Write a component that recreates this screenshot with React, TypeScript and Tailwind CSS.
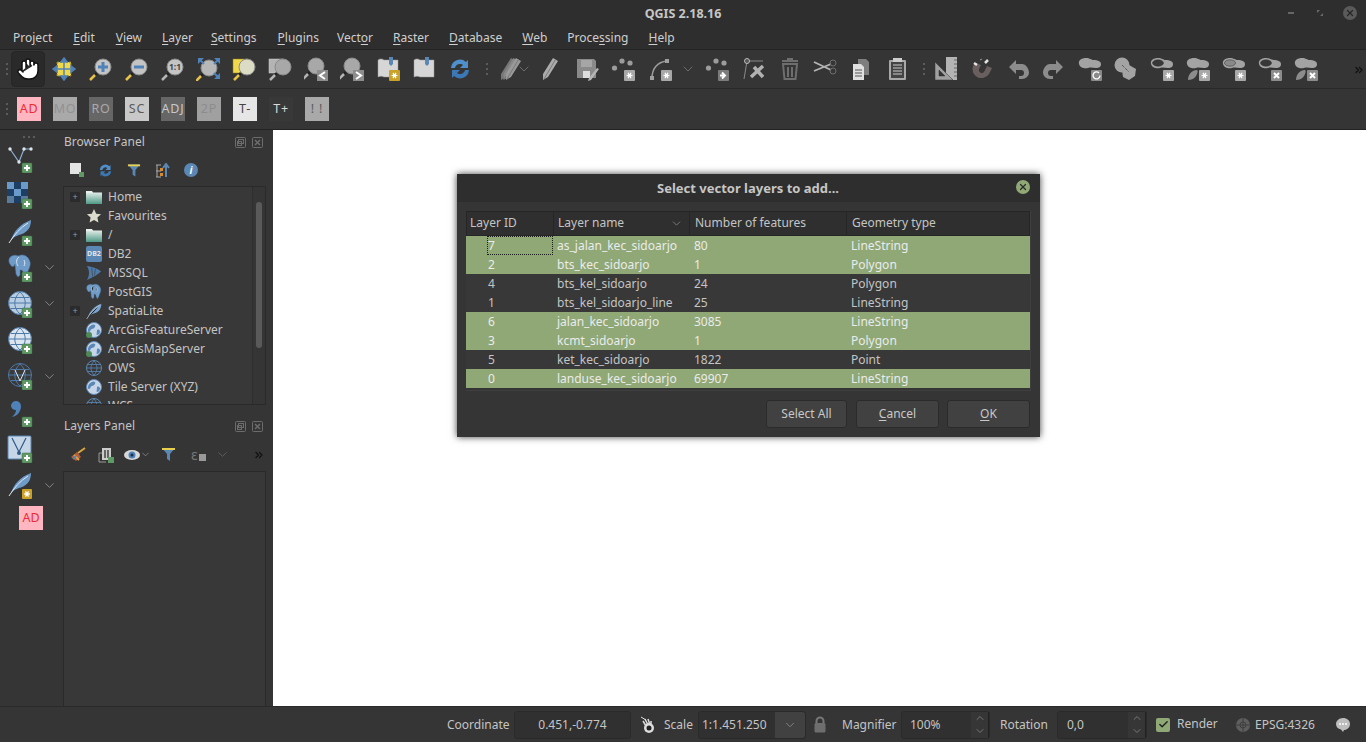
import React from "react";
import { Hand, ChevronDown, ChevronUp, ChevronsRight, Check, X } from "lucide-react";

const S = ({ children, w = 24, h = 24 }: { children: React.ReactNode; w?: number; h?: number }) => (
  <svg width={w} height={h} viewBox={`0 0 ${w} ${h}`} fill="none">{children}</svg>
);

const Mag = ({ children, handle = "#e8c34a", lens = "#c4c4c4", cx = 15, cy = 10 }: { children?: React.ReactNode; handle?: string; lens?: string; cx?: number; cy?: number }) => (
  <>
    <line x1={cx - 6} y1={cy + 6} x2={cx - 8} y2={cy + 8} stroke="#222" strokeWidth="2.5" />
    <line x1={cx - 8} y1={cy + 8} x2={cx - 13} y2={cy + 13} stroke={handle} strokeWidth="2.5" />
    <circle cx={cx} cy={cy} r="8" fill={lens} stroke="#8a8a8a" strokeWidth="1" />
    {children}
  </>
);

const Star = ({ x, y, c = "#fff" }: { x: number; y: number; c?: string }) => (
  <g stroke={c} strokeWidth="1.2">
    <line x1={x - 3} y1={y} x2={x + 3} y2={y} />
    <line x1={x - 1.5} y1={y - 2.6} x2={x + 1.5} y2={y + 2.6} />
    <line x1={x + 1.5} y1={y - 2.6} x2={x - 1.5} y2={y + 2.6} />
    <circle cx={x} cy={y} r="1" fill={c} />
  </g>
);

const BadgeGear = ({ x = 13, y = 13, bg = "#a8a8a8" }: { x?: number; y?: number; bg?: string }) => (
  <>
    <rect x={x} y={y} width="11" height="11" rx="1" fill={bg} />
    <Star x={x + 5.5} y={y + 5.5} />
  </>
);

const BadgeX = ({ x = 13, y = 13 }: { x?: number; y?: number }) => (
  <>
    <rect x={x} y={y} width="11" height="11" rx="1" fill="#8c8c8c" />
    <path d={`M${x + 3} ${y + 3}l5 5m0-5l-5 5`} stroke="#fff" strokeWidth="2" />
  </>
);

const Plus = ({ x = 15, y = 18 }: { x?: number; y?: number }) => (
  <>
    <rect x={x} y={y} width="10" height="10" rx="1" fill="#5f9a64" stroke="#3f6d45" strokeWidth="0.5" />
    <path d={`M${x + 5} ${y + 2}v6M${x + 2} ${y + 5}h6`} stroke="#fff" strokeWidth="2" />
  </>
);

const BLOB = "M1 7c-1-4 3-6 7-6s5 2 8 2 7 1 7 4-2 4-5 4-5-1-8 0-8 0-9-4z";

const Blob = ({ c = "#a3a3a3", hole = false, inner = "#383838" }: { c?: string; hole?: boolean; inner?: string }) => (
  <>
    <path d={BLOB} fill={c} />
    {hole && <ellipse cx="8" cy="6" rx="5.5" ry="3.2" fill={inner} stroke="#333" strokeWidth="0.5" />}
  </>
);

const Lower = () => <path d="M2 23c0-5 3-9 8-10 2 0 2 1 1 4s-4 6-9 6z" fill="#8c8c8c" />;

const Feather = ({ c = "#6f9bc9" }: { c?: string }) => (
  <>
    <path d="M3 21C6 12 12 5 23 1c0 8-4 12-9 14-3 1-7 2-11 6z" fill={c} />
    <path d="M1 24C6 16 12 9 20 4" stroke="#dfe8f0" strokeWidth="1" />
  </>
);

const Elephant = () => (
  <>
    <path d="M4 2c-3 1-4 5-2 8 1 2 2 3 4 2l1-2c0 3 1 6 1 10l2 3 2-2 0-5c2 0 3 0 3 3l2 4 2-3c1-4 4-8 3-12S18 1 14 1c-2 0-3 1-4 1-2-1-4-1-6 0z" fill="#6f9bc9" stroke="#4d7aa8" strokeWidth="0.6" />
    <path d="M11 3c-3 2-3 6-1 9M16 6c1 2 1 4 0 6" stroke="#dbe6f0" strokeWidth="1" />
  </>
);

const Globe = ({ c = "#b9cde2", line = "#4d7aa8" }: { c?: string; line?: string }) => (
  <>
    <circle cx="12" cy="12" r="11.5" fill={c} stroke={line} strokeWidth="1" />
    <path d="M1 12h22M3 6.500h18M3 17.500h18M12 1c-7 6-7 16 0 22M12 1c7 6 7 16 0 22" stroke={line} strokeWidth="1" />
  </>
);

const SmallGlobe = ({ land = true }: { land?: boolean }) => (
  <S w={16} h={16}>
    <circle cx="8" cy="8" r="7.500" fill={land ? "#c6d6e8" : "none"} stroke="#5b87b5" strokeWidth="1" />
    {land ? <path d="M3 5c3-3 5-3 6-2s-1 4-3 4-1 3-3 3-1-3 0-5zM11 8c2-1 3 0 3 2s-2 3-3 3 0-2 0-5z" fill="#5b87b5" /> : <path d="M1 8h14M2 4.500h12M2 11.500h12M8 1c-4 4-4 10 0 14M8 1c4 4 4 10 0 14" stroke="#5b87b5" strokeWidth="0.8" />}
  </S>
);

const Sep = () => (
  <div className="flex flex-col gap-[3px] w-[3px] items-center shrink-0">
    <span className="w-[2px] h-[2px] bg-[#5c5c5c]" />
    <span className="w-[2px] h-[2px] bg-[#5c5c5c]" />
    <span className="w-[2px] h-[2px] bg-[#5c5c5c]" />
  </div>
);

const Btn = ({ children, active = false, w = "w-9" }: { children: React.ReactNode; active?: boolean; w?: string }) => (
  <div className={`${w} h-9 flex items-center justify-center shrink-0 rounded-sm ${active ? "bg-[#2a2a2a] border border-[#262626]" : ""}`}>{children}</div>
);

const Chev = ({ c = "#6c6c6c", s = 16 }: { c?: string; s?: number }) => <ChevronDown size={s} color={c} strokeWidth={1.5} />;

const MapIcon = ({ children }: { children?: React.ReactNode }) => (
  <S>
    <path d="M2 3c2-1.500 4-1.500 6 0h14v17H8c-2-1-4-1-6 0z" fill="#d6d6d6" stroke="#9a9a9a" strokeWidth="0.5" />
    <path d="M13 0h4v7l-2 2-2-2z" fill="#5b87b5" />
    {children}
  </S>
);

const G = "#a0a0a0";
const toolbarOne: [React.ReactNode, string?][] = [
  [<S><Mag cx={15} cy={10}><path d="M15 5v10M10 10h10" stroke="#4f82b8" strokeWidth="3" /></Mag></S>],
  [<S><Mag cx={15} cy={10}><path d="M10 10h10" stroke="#4f82b8" strokeWidth="3" /></Mag></S>],
  [<S><Mag cx={15} cy={10} handle="#b5b5b5"><text x="15" y="13" fontSize="8.500" fontWeight="700" textAnchor="middle" fill="#444" fontFamily="Noto Sans, sans-serif">1:1</text></Mag></S>],
  [<S><Mag cx={13} cy={11} lens="#b8b8b8"><path d="M2 7V1h6zM24 7V1h-6zM24 16v6h-6z" fill="#4f82b8" /><path d="M4 3l4 4M22 3l-4 4M22 20l-4-4" stroke="#4f82b8" strokeWidth="2" /></Mag></S>],
  [<S><rect x="1" y="2" width="14" height="14" fill="#f0d84a" stroke="#8a7b1f" strokeWidth="0.5" /><Mag cx={15} cy={10} lens="#dcdcc4" /></S>],
  [<S><rect x="1" y="2" width="14" height="14" fill="#b4b4b4" stroke="#d0d0d0" strokeWidth="0.5" /><Mag cx={15} cy={10} handle="#b5b5b5" lens="#a8a8a8" /></S>],
  [<S><Mag cx={12} cy={9} handle="#b5b5b5" lens="#a8a8a8" /><rect x="13" y="13" width="11" height="11" fill="#8c8c8c" /><path d="M21 15l-5 3.500 5 3.500" stroke="#fff" strokeWidth="2" /></S>],
  [<S><Mag cx={12} cy={9} handle="#b5b5b5" lens="#a8a8a8" /><rect x="13" y="13" width="11" height="11" fill="#8c8c8c" /><path d="M16 15l5 3.500-5 3.500" stroke="#fff" strokeWidth="2" /></S>],
  [<MapIcon><rect x="13" y="13" width="11" height="11" rx="1" fill="#c9a227" /><Star x={18.500} y={18.500} /></MapIcon>],
  [<MapIcon />],
  [<S><path d="M3 11a9 9 0 0 1 15-6l2-2v8h-8l3-3a5 5 0 0 0-8 3z" fill="#4f8fcb" /><path d="M21 13a9 9 0 0 1-15 6l-2 2v-8h8l-3 3a5 5 0 0 0 8-3z" fill="#3b78b5" /></S>],
];

const Pencil = ({ x = 0, c = G }: { x?: number; c?: string }) => (
  <g transform={`translate(${x} 0)`}>
    <path d="M14 1l5 3-10 16-5 3 0-6z" fill={c} />
    <path d="M16.500 2.500L5 22" stroke="#6f6f6f" strokeWidth="0.8" />
  </g>
);

const Dots = () => (
  <>
    <circle cx="3.500" cy="11" r="2.600" fill="#9c9c9c" />
    <circle cx="11" cy="4" r="2.600" fill="#9c9c9c" />
    <circle cx="19" cy="6" r="2.600" fill="#9c9c9c" />
  </>
);

const toolbarTwo: [React.ReactNode, string][] = [
  [<S><Pencil x={0} c="#777" /><Pencil x={2.5} c="#888" /><Pencil x={5} c="#999" /></S>, "w-[24px]"],
  [<div className="-ml-[5px] w-[16px] flex justify-center"><Chev /></div>, "w-[11px]"],
  [<S><Pencil x={1} c="#ababab" /></S>, "w-[36px]"],
  [<S><path d="M2 2h17l2 2v17H2z" fill="#8a8a8a" /><path d="M6 3h11v7H6z" fill="#a6a6a6" /><path d="M8 14h7v7H8z" fill="#ddd" /><path d="M22 11l2 1-8 11-3 1 1-3z" fill="#b5b5b5" /></S>, "w-[37px]"],
  [<S><Dots /><BadgeGear /></S>, "w-[36px]"],
  [<S><path d="M4 21c0-9 5-16 15-17" stroke="#9c9c9c" strokeWidth="1.500" /><rect x="2" y="19" width="4" height="4" fill="#a0a0a0" /><rect x="17" y="2" width="4" height="4" fill="#a0a0a0" /><BadgeGear /></S>, "w-[37px]"],
  [<Chev />, "w-[20px]"],
  [<S><Dots /><rect x="13" y="13" width="11" height="11" rx="1" fill="#7c7c7c" /><path d="M15 18.500h4m-2-3l3 3-3 3" stroke="#fff" strokeWidth="2" /></S>, "w-[38px]"],
  [<S><path d="M5 4h16M5 4L2 22" stroke="#8a8a8a" strokeWidth="1" /><circle cx="5" cy="4" r="2.500" fill="#555" stroke="#bbb" /><path d="M9 20L21 9M12 10l9 10" stroke="#b0b0b0" strokeWidth="3.500" /></S>, "w-[36px]"],
  [<S><path d="M5 7h14l-1.500 15h-11z" stroke="#6e6e6e" strokeWidth="2" /><path d="M4 4h16M9 2h6M10 10v10M14 10v10" stroke="#6e6e6e" strokeWidth="2" /></S>, "w-[35px]"],
  [<S><path d="M1 5l17 8M1 14l17-7" stroke="#b5b5b5" strokeWidth="1.800" /><circle cx="20" cy="6" r="3" stroke="#6e6e6e" /><circle cx="20" cy="14" r="3" stroke="#6e6e6e" /></S>, "w-[36px]"],
  [<S><path d="M9 2h8l3 3v13H9z" fill="#7e7e7e" /><path d="M4 7h8l3 3v13H4z" fill="#e0e0e0" /><path d="M6 13h7M6 16h7M6 19h7" stroke="#555" strokeWidth="1" /></S>, "w-[36px]"],
  [<S><rect x="4" y="3" width="17" height="20" rx="1" fill="#a8a8a8" /><rect x="6" y="5" width="13" height="16" fill="#444" /><path d="M8 8h9M8 11h9M8 14h9M8 17h9" stroke="#ccc" strokeWidth="1" /><rect x="8" y="1" width="9" height="4" fill="#ccc" /></S>, "w-[36px]"],
];

const toolbarThree: [React.ReactNode, string][] = [
  [<S w={24} h={24}><path d="M12 0h11v23h-5l-6-6z" fill="#b4b4b4" /><path d="M23 3h-3M23 7h-3M23 11h-3M23 15h-3M23 19h-3" stroke="#666" /><path d="M1 23V5l18 18zM5 19h6l-6-6z" fill="#a0a0a0" fillRule="evenodd" stroke="#353535" strokeWidth="0.5" /></S>, "w-[36px]"],
  [<S><path d="M3 9a9 9 0 0 0 16 8l3-6-5-2-3 6a3 3 0 0 1-5-3l2-4-5-2z" fill="#6a5f5f" /><path d="M4 6l3 2M18 3l-3 3" stroke="#e4e4e4" strokeWidth="2.500" /><path d="M10 3l2-1" stroke="#999" /></S>, "w-[36px]"],
  [<S><path d="M10 3L3 10l7 7v-4h5c2 0 3 1 3 3s-1 3-3 3h-2v3h3c4 0 7-3 7-6.500S20 7 16 7h-6z" fill="#8c8c8c" /></S>, "w-[36px]"],
  [<S><path d="M14 3l7 7-7 7v-4H9c-2 0-3 1-3 3s1 3 3 3h2v3H8c-4 0-7-3-7-6.500S4 7 8 7h6z" fill="#8c8c8c" /></S>, "w-[36px]"],
  [<S><Blob /><rect x="13" y="13" width="11" height="11" rx="1" fill="#8a8a8a" /><path d="M22 18.500a3.500 3.500 0 1 1-1-2.500" stroke="#fff" strokeWidth="1.300" /></S>, "w-[36px]"],
  [<S><circle cx="8" cy="8" r="7.500" fill="#a3a3a3" /><path d="M15 8l7 4-1 7-6 4-6-3-1-7z" fill="#a3a3a3" /><path d="M8 8l7 7" stroke="#333" strokeWidth="1" strokeDasharray="1 1" /></S>, "w-[36px]"],
  [<S><Blob hole /><BadgeGear /></S>, "w-[36px]"],
  [<S><Blob /><Lower /><BadgeGear /></S>, "w-[36px]"],
  [<S><Blob hole inner="#8a8a8a" /><BadgeGear /></S>, "w-[36px]"],
  [<S><Blob hole /><BadgeX /></S>, "w-[36px]"],
  [<S><Blob /><Lower /><BadgeX /></S>, "w-[36px]"],
];

const TextBtn = ({ t, cls }: { t: string; cls: string }) => (
  <div className="w-9 h-[25px] flex items-center justify-center shrink-0">
    <div className={`w-6 h-6 flex items-center justify-center text-[12.5px] tracking-[0.8px] whitespace-nowrap ${cls}`}>{t}</div>
  </div>
);

const labelBtns: [string, string][] = [
  ["AD", "bg-[#ffb6c1] text-[#f02a35]"],
  ["MO", "bg-[#a9a9a9] text-[#919191]"],
  ["RO", "bg-[#666666] text-[#a9a9a9]"],
  ["SC", "bg-[#c8c8c8] text-[#5a5a5a]"],
  ["ADJ", "bg-[#666666] text-[#c8c8c8]"],
  ["2P", "bg-[#a0a0a0] text-[#8c8c8c]"],
  ["T-", "bg-[#e6e6e6] text-[#444444]"],
  ["T+", "bg-[#383838] text-[#d8d8d8]"],
  ["! !", "bg-[#a9a9a9] text-[#5c5c5c]"],
];

const menu: [string, number, string][] = [
  ["Project", 3, "mr-[21px]"],
  ["Edit", 0, "mr-[21px]"],
  ["View", 0, "mr-[20px]"],
  ["Layer", 0, "mr-[18px]"],
  ["Settings", 0, "mr-[21px]"],
  ["Plugins", 0, "mr-[18px]"],
  ["Vector", 4, "mr-[20px]"],
  ["Raster", 0, "mr-[20px]"],
  ["Database", 0, "mr-[20px]"],
  ["Web", 0, "mr-[20px]"],
  ["Processing", 5, "mr-[20px]"],
  ["Help", 0, ""],
];

const Mn = ({ t, i }: { t: string; i: number }) => (
  <span>{t.slice(0, i)}<span className="underline underline-offset-2">{t[i]}</span>{t.slice(i + 1)}</span>
);

const PanelHead = ({ title }: { title: string }) => (
  <div className="h-[24px] flex items-center pl-[2px] pr-[5px] justify-between shrink-0">
    <span className="text-[12px] text-[#c4c4c4]">{title}</span>
    <div className="flex gap-[6px]">
      <svg width="11" height="11" viewBox="0 0 11 11" fill="none" stroke="#6c6c6c"><rect x="0.500" y="0.500" width="10" height="10" rx="1" /><rect x="3.500" y="2.500" width="5" height="4" /><rect x="2.500" y="4.500" width="4" height="4" /></svg>
      <svg width="11" height="11" viewBox="0 0 11 11" fill="none" stroke="#6c6c6c"><rect x="0.500" y="0.500" width="10" height="10" rx="1" /><path d="M3 3l5 5m0-5l-5 5" strokeWidth="1.500" /></svg>
    </div>
  </div>
);

const Folder = () => (
  <svg width="16" height="14" viewBox="0 0 16 14"><path d="M0 1h6l1 1.500h9V14H0z" fill="#e8efec" /><rect x="0" y="3" width="16" height="11" fill="url(#fg)" /><defs><linearGradient id="fg" x1="0" y1="0" x2="0" y2="1"><stop offset="0" stopColor="#d9e8e2" /><stop offset="1" stopColor="#4f9a87" /></linearGradient></defs></svg>
);

const tree: [string, boolean, React.ReactNode][] = [
  ["Home", true, <Folder />],
  ["Favourites", false, <svg width="16" height="16" viewBox="0 0 17 17"><path d="M8.500 1l2.300 5 5.200.600-3.900 3.500 1.100 5.400-4.700-2.700-4.700 2.700 1.100-5.400L1 6.600 6.200 6z" fill="#dcdccc" /></svg>],
  ["/", true, <Folder />],
  ["DB2", false, <div className="w-4 h-4 rounded-[2px] bg-[#5b87b5] text-[7px] font-bold text-[#e4e4e4] flex items-center justify-center leading-none">DB2</div>],
  ["MSSQL", false, <svg width="16" height="16" viewBox="0 0 17 17"><path d="M1 1c5 1 11 2 15 6-3 3-8 6-15 9 3-5 3-10 0-15z" fill="#4f7aa8" /><path d="M6 3l1 9M10 4l-1 7" stroke="#383838" strokeWidth="0.600" /></svg>],
  ["PostGIS", false, <svg width="16" height="17" viewBox="0 0 24 24"><Elephant /></svg>],
  ["SpatiaLite", true, <svg width="16" height="16" viewBox="0 0 24 24"><Feather c="#7aa3cd" /></svg>],
  ["ArcGisFeatureServer", false, <div className="relative"><SmallGlobe /><span className="absolute left-0 bottom-0 w-[6px] h-[6px] bg-[#4e8a55] rounded-full" /></div>],
  ["ArcGisMapServer", false, <div className="relative"><SmallGlobe /><span className="absolute left-0 bottom-0 w-[6px] h-[6px] bg-[#4e8a55] rounded-full" /></div>],
  ["OWS", false, <SmallGlobe land={false} />],
  ["Tile Server (XYZ)", false, <SmallGlobe />],
  ["WCS", false, <SmallGlobe land={false} />],
];

const leftIcons: [React.ReactNode, boolean, string][] = [
  [<S w={28} h={28}><path d="M3 4l9 13 5-13h7" stroke="#8eb0d2" strokeWidth="1.200" /><circle cx="3" cy="4" r="1.700" fill="#dde6ee" /><circle cx="17" cy="4" r="1.700" fill="#dde6ee" /><circle cx="24" cy="4" r="1.700" fill="#dde6ee" /><circle cx="12" cy="17" r="1.700" fill="#dde6ee" /><Plus /></S>, false, "h-[35px]"],
  [<S w={28} h={28}><path d="M7 1h7v7H7zM0 8h7v7H0zM14 8h7v7h-7zM7 15h7v7H7z" fill="#1d3f66" /><path d="M0 1h7v7H0zM14 1h7v7h-7zM7 8h7v7H7z" fill="#6a9ac9" /><path d="M0 15h7v7H0zM14 15h7v7h-7z" fill="#6a9ac9" opacity="0.700" /><Plus /></S>, false, "h-[38px]"],
  [<S w={28} h={28}><g transform="translate(1 1)"><Feather /></g><Plus /></S>, false, "h-[36px]"],
  [<S w={28} h={28}><g transform="translate(1 0)"><Elephant /></g><Plus /></S>, true, "h-[35px]"],
  [<S w={28} h={28}><g transform="translate(1 1)"><Globe /></g><Plus /></S>, true, "h-[37px]"],
  [<S w={28} h={28}><g transform="translate(1 1)"><Globe c="#dbe6f0" /></g><Plus /></S>, false, "h-[36px]"],
  [<S w={28} h={28}><g transform="translate(1 1)"><Globe c="#3a3a3a" /><path d="M7 7l5 11 5-11" stroke="#dfe8f0" strokeWidth="1" /></g><Plus /></S>, true, "h-[36px]"],
  [<S w={28} h={28}><path d="M4 7a5 5 0 0 1 10 0c0 6-4 10-9 11 3-3 4-5 4-7a5 5 0 0 1-5-4z" fill="#4f82b8" /><Plus /></S>, false, "h-[37px]"],
  [<S w={28} h={28}><rect x="1" y="1" width="23" height="23" rx="1" fill="#c7d6e6" stroke="#5b87b5" /><path d="M5 3l7 14 7-14" stroke="#2e5a88" strokeWidth="1.200" /><circle cx="12" cy="18" r="2" fill="#2e5a88" /><Plus /></S>, false, "h-[36px]"],
  [<S w={28} h={28}><g transform="translate(1 1)"><Feather /></g><rect x="15" y="18" width="10" height="10" rx="1" fill="#c9a227" /><Star x={20} y={23} /></S>, true, "h-[36px]"],
];

const rows: [string, string, string, string, boolean][] = [
  ["7", "as_jalan_kec_sidoarjo", "80", "LineString", true],
  ["2", "bts_kec_sidoarjo", "1", "Polygon", true],
  ["4", "bts_kel_sidoarjo", "24", "Polygon", false],
  ["1", "bts_kel_sidoarjo_line", "25", "LineString", false],
  ["6", "jalan_kec_sidoarjo", "3085", "LineString", true],
  ["3", "kcmt_sidoarjo", "1", "Polygon", true],
  ["5", "ket_kec_sidoarjo", "1822", "Point", false],
  ["0", "landuse_kec_sidoarjo", "69907", "LineString", true],
];

const DlgBtn = ({ children, w }: { children: React.ReactNode; w: string }) => (
  <div className={`${w} h-[28px] rounded-[3px] bg-[#414141] border border-[#2b2b2b] flex items-center justify-center text-[12px] text-[#c8c8c8]`}>{children}</div>
);

const Spin = ({ value, w, text }: { value: string; w: string; text: string }) => (
  <div className={`${w} h-[28px] flex items-stretch bg-[#303030] border border-[#2a2a2a] rounded-[3px] text-[12px] text-[#c4c4c4]`}>
    <div className={`flex-1 flex items-center ${text}`}>{value}</div>
    <div className="w-[18px] flex flex-col items-center justify-center bg-[#363636] border-r border-[#222]">
      <ChevronUp size={12} color="#777" />
      <ChevronDown size={12} color="#777" className="mt-[1px]" />
    </div>
  </div>
);

export default function App() {
  return (
    <div className="w-[1366px] h-[742px] overflow-hidden flex flex-col bg-[#353535] text-[12px] text-[#c8c8c8] font-['Noto_Sans',sans-serif]">
      {/* title */}
      <div className="h-[24px] relative flex items-center justify-center bg-[#2e2e2e] shrink-0">
        <span className="font-bold text-[12.5px] text-[#c6c6c6] mt-[4px]">QGIS 2.18.16</span>
        <div className="absolute right-[9px] top-[6px] flex items-center gap-[20px]">
          <span className="w-[6px] h-[2px] bg-[#666] mr-[3px]" />
          <svg width="6" height="6" viewBox="0 0 6 6"><path d="M0 0h3L0 3zM6 6H3l3-3z" fill="#6a6a6a" /></svg>
          <div className="w-[14px] h-[14px] rounded-full bg-[#5a5a5a] flex items-center justify-center"><X size={10} color="#262626" strokeWidth={3} /></div>
        </div>
      </div>
      {/* menu */}
      <div className="h-[26px] flex items-center pl-[13px] pt-[2px] bg-[#2e2e2e] border-b border-[#232323] text-[#cfcfcf] shrink-0">
        {menu.map(([t, i, m]) => (
          <span key={t} className={m}><Mn t={t} i={i} /></span>
        ))}
      </div>
      {/* toolbar 1 */}
      <div className="h-[39px] flex items-center bg-[#353535] border-b border-[#2a2a2a] pl-[5px] shrink-0 relative">
        <Sep />
        <div className="w-[3px]" />
        <Btn active w="w-[34px]"><Hand size={24} fill="#fff" color="#111" strokeWidth={1.500} /></Btn>
        <div className="w-[1px]" />
        <Btn><S><path d="M5 5h14v14H5z" fill="#f0d84a" stroke="#8a7b1f" strokeDasharray="2 1" /><path d="M12 1l3 4H9zM12 23l3-4H9zM1 12l4-3v6zM23 12l-4-3v6zM6 12h12M12 6v12" fill="#4f82b8" stroke="#4f82b8" strokeWidth="1.500" /></S></Btn>
        {toolbarOne.map(([ic], i) => <Btn key={i}>{ic}</Btn>)}
        <div className="w-[7px]" />
        <Sep />
        <div className="w-[9px]" />
        {toolbarTwo.map(([ic, w], i) => <Btn key={i} w={w}>{ic}</Btn>)}
        <div className="w-[7px]" />
        <Sep />
        <div className="w-[3px]" />
        {toolbarThree.map(([ic, w], i) => <Btn key={i} w={w}>{ic}</Btn>)}
        <ChevronsRight size={12} color="#111" strokeWidth={2.500} className="absolute right-[1px] top-[14px]" />
      </div>
      {/* toolbar 2 */}
      <div className="h-[41px] flex items-center bg-[#353535] border-b border-[#232323] pl-[5px] shrink-0">
        <Sep />
        <div className="w-[3px]" />
        {labelBtns.map(([t, c]) => <TextBtn key={t} t={t} cls={c} />)}
      </div>
      {/* main */}
      <div className="flex-1 flex min-h-0">
        <div className="w-[62px] shrink-0 pt-[6px] flex flex-col items-stretch">
          <div className="flex justify-center gap-[3px] mb-[3px] pr-[4px]">
            <span className="w-[2px] h-[2px] bg-[#5c5c5c]" /><span className="w-[2px] h-[2px] bg-[#5c5c5c]" /><span className="w-[2px] h-[2px] bg-[#5c5c5c]" />
          </div>
          {leftIcons.map(([ic, ch, h], i) => (
            <div key={i} className={`${h} flex items-center pl-[7px] shrink-0`}>
              <div className="w-[28px] h-[28px] shrink-0">{ic}</div>
              {ch && <div className="ml-[7px]"><Chev c="#8a8a8a" s={15} /></div>}
            </div>
          ))}
          <div className="h-[30px] flex items-center pl-[19px] shrink-0">
            <div className="w-6 h-6 bg-[#ffb6c1] text-[#f02a35] text-[12.5px] flex items-center justify-center">AD</div>
          </div>
        </div>
        <div className="w-[206px] shrink-0 flex flex-col">
          <PanelHead title="Browser Panel" />
          <div className="h-[32px] flex items-center pl-[8px] gap-[14px] shrink-0">
            <svg width="14" height="14" viewBox="0 0 14 14"><rect x="0" y="0" width="11" height="11" fill="#e4e4e4" /><rect x="9" y="9" width="5" height="5" fill="#5f9a64" /></svg>
            <svg width="15" height="15" viewBox="0 0 24 24"><path d="M3 11a9 9 0 0 1 15-6l2-2v8h-8l3-3a5 5 0 0 0-8 3z" fill="#4f8fcb" /><path d="M21 13a9 9 0 0 1-15 6l-2 2v-8h8l-3 3a5 5 0 0 0 8-3z" fill="#3b78b5" /></svg>
            <svg width="14" height="15" viewBox="0 0 15 15"><path d="M1 1h13l-5 6v7l-3-2V7z" fill="#5b87b5" /><path d="M1 1h13v2H1z" fill="#e8d04a" /></svg>
            <svg width="15" height="15" viewBox="0 0 15 15"><path d="M1 2h5M1 8h5M1 14h5M2 2v12" stroke="#aaa" /><rect x="5" y="5" width="3" height="3" fill="#d88a2c" /><rect x="5" y="10" width="3" height="3" fill="#d88a2c" /><path d="M11 14V3M8 5l3-4 3 4" stroke="#5b87b5" strokeWidth="2" fill="none" /></svg>
            <div className="w-[14px] h-[14px] rounded-full bg-[#5b87b5] text-[#fff] text-[10px] italic font-bold flex items-center justify-center">i</div>
          </div>
          <div className="h-[219px] ml-[1px] mr-[2px] border border-[#2a2a2a] bg-[#383838] flex overflow-hidden shrink-0">
            <div className="flex-1">
              {tree.map(([t, exp, ic]) => (
                <div key={t} className="h-[19px] flex items-center text-[12px] text-[#c4c4c4] shrink-0">
                  <div className="w-[20px] pl-[6px] shrink-0">
                    {exp && <div className="w-[10px] h-[10px] bg-[#2b2b2b] rounded-[1px] flex items-center justify-center text-[9px] leading-none text-[#999]">+</div>}
                  </div>
                  <div className="w-[20px] h-[19px] flex items-center justify-center shrink-0">{ic}</div>
                  <span className="ml-[4px]">{t}</span>
                </div>
              ))}
            </div>
            <div className="w-[13px] shrink-0 border-l border-[#2e2e2e] relative bg-[#353535]">
              <div className="absolute left-[3px] top-[15px] w-[6px] h-[146px] rounded-[3px] bg-[#5a5a5a]" />
            </div>
          </div>
          <div className="h-[9px] shrink-0" />
          <PanelHead title="Layers Panel" />
          <div className="h-[33px] flex items-center pl-[8px] shrink-0 relative">
            <svg width="16" height="16" viewBox="0 0 16 16"><path d="M1 10l6-5 4 5-5 4z" fill="#b85a3c" /><path d="M8 6l7-5M4 8l5 5" stroke="#d8a63c" strokeWidth="2" /><path d="M3 12l3-3" stroke="#4f82b8" strokeWidth="2" /></svg>
            <svg className="ml-[12px]" width="16" height="16" viewBox="0 0 16 16"><path d="M1 6h3M1 6v9h7" stroke="#999" fill="none" /><rect x="4" y="1" width="9" height="12" fill="#ccc" /><path d="M7 3v8M10 3v8" stroke="#444" strokeWidth="1.500" /><rect x="10" y="10" width="6" height="6" fill="#5f9a64" /></svg>
            <div className="flex items-center ml-[10px]">
              <svg width="16" height="12" viewBox="0 0 16 12"><ellipse cx="8" cy="6" rx="8" ry="5" fill="#d8d8d8" /><circle cx="8" cy="6" r="3.500" fill="#4f82b8" /><circle cx="8" cy="6" r="1.500" fill="#1c2f44" /></svg>
              <Chev c="#999" s={11} />
            </div>
            <svg className="ml-[10px]" width="15" height="15" viewBox="0 0 15 15"><path d="M1 1h13l-5 6v7l-3-2V7z" fill="#5b87b5" /><path d="M1 1h13v2H1z" fill="#e8d04a" /></svg>
            <div className="flex items-center ml-[15px]">
              <span className="text-[14px] text-[#777] leading-none w-[8px]">ε</span>
              <span className="w-[7px] h-[7px] bg-[#999] mt-[6px]" />
            </div>
            <div className="ml-[9px]"><Chev c="#5e5e5e" s={15} /></div>
            <ChevronsRight size={12} color="#111" strokeWidth={2.500} className="absolute right-[3px] top-[11px]" />
          </div>
          <div className="flex-1 ml-[1px] mr-[2px] border border-[#2a2a2a] border-b-0 bg-[#383838]" />
        </div>
        <div className="w-[5px] shrink-0" />
        {/* canvas */}
        <div className="flex-1 bg-white relative">
          <div className="absolute left-[184px] top-[44px] w-[583px] h-[263px] bg-[#353535] shadow-[0_0_7px_rgba(0,0,0,0.75)] flex flex-col">
            <div className="h-[28px] relative flex items-center justify-center bg-[#2e2e2e] shrink-0">
              <span className="font-bold text-[13px] text-[#c6c6c6] pt-[1px] -ml-[1px]">Select vector layers to add...</span>
              <div className="absolute right-[10px] top-[6px] w-[14px] h-[14px] rounded-full bg-[#8fa876] flex items-center justify-center"><X size={10} color="#2c2c2c" strokeWidth={3} /></div>
            </div>
            <div className="mt-[9px] ml-[9px] w-[565px] h-[180px] border-r border-b border-[#3f3f3f] shrink-0 text-[12px]">
              <div className="h-[25px] flex bg-[#2f2f2f] border border-[#262626] text-[#c4c4c4]">
                <div className="w-[87px] flex items-center pl-[3px] pb-[1px] border-r border-[#262626]">Layer ID</div>
                <div className="w-[136px] flex items-center pl-[4px] pb-[1px] border-r border-[#262626] justify-between pr-[6px]">Layer name<Chev c="#8a8a8a" s={13} /></div>
                <div className="w-[157px] flex items-center pl-[5px] pb-[1px] border-r border-[#262626]">Number of features</div>
                <div className="flex-1 flex items-center pl-[5px] pb-[1px]">Geometry type</div>
              </div>
              {rows.map(([id, n, c, g, sel], i) => (
                <div key={id} className={`h-[19px] flex items-center ${sel ? "bg-[#8fa876] text-[#ebebeb]" : "bg-[#383838] text-[#c4c4c4]"}`}>
                  <div className="w-[87px] h-full flex items-center pl-[22px] relative">
                    {id}
                    {i === 0 && <span className="absolute left-[21px] top-0 bottom-0 right-0 border border-dotted border-[#1c1c1c]" />}
                  </div>
                  <div className="w-[137px] pl-[4px]">{n}</div>
                  <div className="w-[157px] pl-[4px]">{c}</div>
                  <div className="flex-1 pl-[4px]">{g}</div>
                </div>
              ))}
            </div>
            <div className="mt-[9px] mr-[10px] flex justify-end">
              <DlgBtn w="w-[81px]">Select All</DlgBtn>
              <div className="w-[9px]" />
              <DlgBtn w="w-[83px]"><Mn t="Cancel" i={0} /></DlgBtn>
              <div className="w-[8px]" />
              <DlgBtn w="w-[83px]"><Mn t="OK" i={0} /></DlgBtn>
            </div>
          </div>
        </div>
      </div>
      {/* status */}
      <div className="h-[36px] flex items-center shrink-0 bg-[#353535] text-[12px] text-[#c4c4c4] pl-[447px] border-t border-[#2a2a2a]">
        <span className="w-[67px] shrink-0">Coordinate</span>
        <div className="w-[117px] h-[28px] bg-[#303030] border border-[#2a2a2a] rounded-[3px] flex items-center justify-center shrink-0">0.451,-0.774</div>
        <div className="w-[33px] flex justify-center shrink-0">
          <svg width="16" height="18" viewBox="0 0 16 18"><path d="M3 5l3 5M5 3l3 6M8 3l2 6M11 5l0 5" stroke="#ddd" strokeWidth="1.500" /><circle cx="9" cy="12" r="5" fill="#ddd" /><circle cx="9" cy="12" r="2.500" fill="#222" /><path d="M1 1l5 3" stroke="#ddd" /></svg>
        </div>
        <span className="w-[34px] shrink-0">Scale</span>
        <div className="w-[108px] h-[28px] bg-[#303030] border border-[#2a2a2a] rounded-[3px] flex items-center shrink-0">
          <span className="flex-1 pl-[3px]">1:1.451.250</span>
          <div className="w-[30px] h-full bg-[#414141] flex items-center justify-center rounded-r-[3px]"><Chev c="#8a8a8a" s={14} /></div>
        </div>
        <div className="w-[28px] flex justify-center shrink-0">
          <svg width="12" height="17" viewBox="0 0 12 17" fill="none"><path d="M2.500 8V5a3.500 3.500 0 0 1 7 0v3" stroke="#777" strokeWidth="2" /><rect x="0.500" y="7" width="11" height="9.500" rx="1.500" fill="#6e6e6e" /></svg>
        </div>
        <span className="w-[59px] shrink-0 ml-[8px]">Magnifier</span>
        <Spin value="100%" w="w-[89px] shrink-0" text="pl-[8px]" />
        <span className="w-[57px] shrink-0 ml-[10px]">Rotation</span>
        <Spin value="0,0" w="w-[90px] shrink-0" text="pl-[9px]" />
        <div className="w-[14px] h-[14px] ml-[9px] rounded-[2px] bg-[#8fa876] flex items-center justify-center shrink-0"><Check size={11} color="#1f1f1f" strokeWidth={3} /></div>
        <span className="ml-[7px] w-[42px] shrink-0 -mt-[1px]">Render</span>
        <div className="w-[16px] h-[16px] ml-[16px] shrink-0">
          <svg width="16" height="16" viewBox="0 0 16 16"><circle cx="8" cy="8" r="7" fill="#5e5e5e" /><path d="M8 0v16M0 8h16" stroke="#3e3e3e" /><circle cx="8" cy="8" r="3" fill="none" stroke="#3e3e3e" /></svg>
        </div>
        <span className="ml-[4px] w-[60px] shrink-0">EPSG:4326</span>
        <div className="ml-[20px] shrink-0">
          <svg width="16" height="16" viewBox="0 0 16 16"><path d="M8 1c4 0 7 2.500 7 6s-3 6-6 6l-1 2-2-2.500C3 12 1 10 1 7s3-6 7-6z" fill="#bdbdbd" /><circle cx="5" cy="7" r="1" fill="#fff" /><circle cx="8" cy="7" r="1" fill="#fff" /><circle cx="11" cy="7" r="1" fill="#fff" /></svg>
        </div>
      </div>
    </div>
  );
}
